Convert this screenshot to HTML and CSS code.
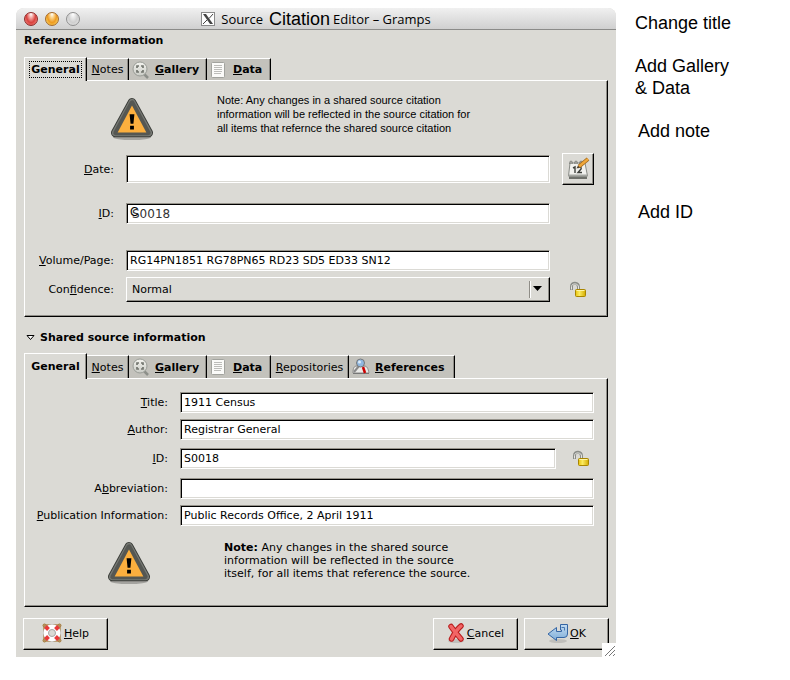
FILE: index.html
```html
<!DOCTYPE html>
<html lang="en">
<head>
    <meta charset="UTF-8">
    <meta name="viewport" content="width=device-width, initial-scale=1.0">
    <title>Source Citation Editor - Gramps</title>
    <link rel="stylesheet" href="styles.css">
</head>
<body>

<!-- shared icons -->
<svg class="defs" width="0" height="0" aria-hidden="true">
    <linearGradient id="ring" x1="0" y1="0" x2="0" y2="1">
        <stop offset="0" stop-color="#f4f4ef"/>
        <stop offset="1" stop-color="#c9cbc5"/>
    </linearGradient>
    <linearGradient id="gold" x1="0" y1="0" x2="1" y2="0">
        <stop offset="0" stop-color="#e8c40c"/>
        <stop offset="0.4" stop-color="#fbea60"/>
        <stop offset="1" stop-color="#d4ac00"/>
    </linearGradient>
    <linearGradient id="blue" x1="0" y1="0" x2="0" y2="1">
        <stop offset="0" stop-color="#c3dcf2"/>
        <stop offset="1" stop-color="#7fadd8"/>
    </linearGradient>
    <symbol id="warning" viewBox="-1 -1 46 46">
        <ellipse cx="22" cy="41" rx="20" ry="3" fill="#000" opacity="0.25"/>
        <path d="M22 4.500 4.500 36.500H39.500Z" fill="#555753" stroke="#3c3e3a" stroke-width="9" stroke-linejoin="round"/>
        <path d="M22 4.500 4.500 36.500H39.500Z" fill="#555753" stroke="#767873" stroke-width="7" stroke-linejoin="round"/>
        <path d="M22 5 5 36.500H39Z" fill="#555753" stroke="#555753" stroke-width="5" stroke-linejoin="round"/>
        <path d="M22 8 7 36H37Z" fill="#fcaf3e"/>
        <path d="M19.500 17h5l-1 10h-3ZM20 29h4v4h-4Z" fill="#000"/>
    </symbol>
    <symbol id="gallery" viewBox="0 0 18 18">
        <path d="M12 13l4 4" stroke="#8d908a" stroke-width="2.500"/>
        <circle cx="8" cy="8" r="7" fill="url(#ring)" stroke="#9a9d97"/>
        <path d="M5 7V5h2M9 5h2v2M11 9v2h-2M7 11H5v-2" fill="none" stroke="#73766f" stroke-width="1.700"/>
    </symbol>
    <symbol id="page" viewBox="0 0 18 18">
        <rect x="1.500" y="1.500" width="13" height="15" rx="1" fill="#fbfbf9" stroke="#a2a39e"/>
        <path d="M4 4.500h8M4 6.500h8M4 8.500h8M4 10.500h8M4 12.500h7" stroke="#bdbdba"/>
    </symbol>
    <symbol id="lock" viewBox="0 0 18 18">
        <path d="M2.500 9V5.500C2.500 1 9.500 1 9.500 6V8" fill="none" stroke="#8b8d88" stroke-width="3"/>
        <path d="M2.500 8.500V5.500C2.500 2 9.500 2 9.500 6V8" fill="none" stroke="#e6e6e2" stroke-width="1"/>
        <rect x="6.500" y="8.500" width="10" height="7" rx="1" fill="url(#gold)" stroke="#a88500"/>
        <path d="M7.500 9.500h8" stroke="#fff6a8"/>
    </symbol>
</svg>

<div class="page">
    <main class="window">
        <header class="titlebar">
            <div class="lights">
                <button class="light red" aria-label="Close"></button>
                <button class="light amber" aria-label="Minimize"></button>
                <button class="light grey" aria-label="Zoom" disabled></button>
            </div>
            <h1>
                <svg width="14" height="14" viewBox="0 0 14 14"><rect x="0.500" y="0.500" width="13" height="13" fill="#fdfdfd" stroke="#8a8a8a"/><path d="M2 2h3l7 10H9Z" fill="#444"/><path d="M12 2 8 6.500M6 8l-4 4" stroke="#444"/></svg>
                <span class="word">Source</span>
                <span class="citation">Citation</span>
                <span>Editor – Gramps</span>
            </h1>
        </header>

        <form class="content">
            <h2>Reference information</h2>
            <div class="tabs" role="tablist">
                <button type="button" class="tab active focused general" role="tab" aria-selected="true"><span>General</span></button>
                <button type="button" class="tab notes" role="tab">
                    <span><u>N</u>otes</span></button>
                <button type="button" class="tab strong gallery" role="tab">
                    <svg width="18" height="18"><use href="#gallery"/></svg>
                    <span><u>G</u>allery</span></button>
                <button type="button" class="tab strong data" role="tab">
                    <svg width="18" height="18"><use href="#page"/></svg>
                    <span><u>D</u>ata</span></button>
            </div>
            <section class="panel reference">
                <div class="hint">
                    <svg width="44" height="44"><use href="#warning"/></svg>
                    <p>Note: Any changes in a shared source citation<br>
                    information will be reflected in the source citation for<br>
                    all items that refernce the shared source citation</p>
                </div>
                <div class="row date-row">
                    <label for="date"><u>D</u>ate:</label>
                    <input type="text" id="date" class="tall">
                    <button type="button" class="raised calendar" aria-label="Edit date">
                        <svg width="24" height="24" viewBox="0 0 24 24">
                            <path d="M3 19h18v3H3Z" fill="#6f716c"/>
                            <path d="M4 6h15l2.500 13h-19Z" fill="#f1f1ee" stroke="#898b86"/>
                            <path d="M2.500 18.500h19" stroke="#a5a7a2" stroke-width="2"/>
                            <path d="M4 7c-1-4 3-4 2 0M9 7c-1-4 3-4 2 0M14 7c-1-4 3-4 2 0" fill="none" stroke="#6e706b"/>
                            <path d="M7 11l2-1v6M12 11c1-2 4-1 3 1l-3 3.500h4" fill="none" stroke="#3e403c" stroke-width="1.400"/>
                            <path d="M13 9.500 22 2" stroke="#9a651c" stroke-width="4"/>
                            <path d="M13 9.500 22 2" stroke="#efa63a" stroke-width="2.500"/>
                            <path d="M10.500 11.500l1.500-3 2 2Z" fill="#554430"/>
                        </svg>
                    </button>
                </div>
                <div class="row id-row">
                    <label for="ref-id"><u>I</u>D:</label>
                    <div class="field">
                        <input type="text" id="ref-id" class="edited" value="S0018">
                        <span class="over">C</span>
                    </div>
                </div>
                <div class="row volume-row">
                    <label for="volume"><u>V</u>olume/Page:</label>
                    <input type="text" id="volume" value="RG14PN1851 RG78PN65 RD23 SD5 ED33 SN12">
                </div>
                <div class="row">
                    <label for="confidence">Con<u>f</u>idence:</label>
                    <div class="field">
                        <select id="confidence" class="raised">
                            <option>Normal</option>
                        </select>
                        <svg class="arrow" width="22" height="17" viewBox="0 0 22 17"><path d="M1.500 0v17" stroke="#8f8d87"/><path d="M2.500 0v17" stroke="#fff"/><path d="M5 5h9L9.500 10Z" fill="#000"/></svg>
                    </div>
                    <svg class="lock" width="18" height="18"><use href="#lock"/></svg>
                </div>
            </section>

            <h2 class="shared-title">
                <svg width="10" height="8" viewBox="0 0 10 8"><path d="M1 1.500h7L4.500 5.500Z" fill="#fff" stroke="#000"/></svg>
                Shared source information
            </h2>
            <div class="tabs lower" role="tablist">
                <button type="button" class="tab active general" role="tab" aria-selected="true"><span>General</span></button>
                <button type="button" class="tab notes" role="tab">
                    <span><u>N</u>otes</span></button>
                <button type="button" class="tab strong gallery" role="tab">
                    <svg width="18" height="18"><use href="#gallery"/></svg>
                    <span><u>G</u>allery</span></button>
                <button type="button" class="tab strong data" role="tab">
                    <svg width="18" height="18"><use href="#page"/></svg>
                    <span><u>D</u>ata</span></button>
                <button type="button" class="tab repositories" role="tab">
                    <span><u>R</u>epositories</span></button>
                <button type="button" class="tab strong references" role="tab">
                    <svg width="18" height="18" viewBox="0 0 18 18">
                        <path d="M1 15c0-5 1-7 4-7h7c3 0 4 2 5 7Z" fill="#e9e9e7" stroke="#8c8c8a"/>
                        <path d="M1 15.500h16" stroke="#777"/>
                        <path d="M11 9l2 6" stroke="#cc0000" stroke-width="2.500"/>
                        <path d="M7 8l-5 6" stroke="#888" stroke-width="2"/>
                        <circle cx="8.500" cy="5" r="4" fill="#8fb7e0" stroke="#777"/>
                        <circle cx="7.500" cy="4" r="1.500" fill="#dcebf8"/>
                    </svg>
                    <span><u>R</u>eferences</span></button>
            </div>
            <section class="panel source">
                <div class="row">
                    <label for="title"><u>T</u>itle:</label>
                    <input type="text" id="title" value="1911 Census">
                </div>
                <div class="row">
                    <label for="author"><u>A</u>uthor:</label>
                    <input type="text" id="author" value="Registrar General">
                </div>
                <div class="row source-id">
                    <label for="source-id"><u>I</u>D:</label>
                    <div class="with-lock">
                        <input type="text" id="source-id" value="S0018">
                        <svg class="lock" width="18" height="18"><use href="#lock"/></svg>
                    </div>
                </div>
                <div class="row abbreviation">
                    <label for="abbreviation">A<u>b</u>breviation:</label>
                    <input type="text" id="abbreviation">
                </div>
                <div class="row">
                    <label for="publication"><u>P</u>ublication Information:</label>
                    <input type="text" id="publication" value="Public Records Office, 2 April 1911">
                </div>
                <div class="hint">
                    <svg width="44" height="44"><use href="#warning"/></svg>
                    <p><b>Note:</b> Any changes in the shared source<br>
                    information will be reflected in the source<br>
                    itself, for all items that reference the source.</p>
                </div>
            </section>

            <footer class="actions">
                <button type="button" class="raised action help">
                    <svg width="20" height="20" viewBox="0 0 20 20">
                        <path d="M2 2h16v16H2Z" fill="none" stroke="#b38a4d" stroke-width="1.500"/>
                        <circle cx="2.500" cy="2.500" r="1.500" fill="none" stroke="#a47b40"/><circle cx="17.500" cy="2.500" r="1.500" fill="none" stroke="#a47b40"/>
                        <circle cx="2.500" cy="17.500" r="1.500" fill="none" stroke="#a47b40"/><circle cx="17.500" cy="17.500" r="1.500" fill="none" stroke="#a47b40"/>
                        <circle cx="10" cy="10" r="6" fill="none" stroke="#aaa" stroke-width="6"/>
                        <circle cx="10" cy="10" r="6" fill="none" stroke="#fff" stroke-width="5"/>
                        <path d="M3.500 3.500l3 3M16.500 3.500l-3 3M3.500 16.500l3-3M16.500 16.500l-3-3" stroke="#e83a3a" stroke-width="4"/>
                        <circle cx="10" cy="10" r="3.500" fill="#dbdad5" stroke="#aaa"/>
                    </svg>
                    <span><u>H</u>elp</span>
                </button>
                <button type="button" class="raised action cancel">
                    <svg width="18" height="20" viewBox="0 0 18 20">
                        <ellipse cx="9" cy="18" rx="8" ry="2" fill="#000" opacity="0.12"/>
                        <path d="M4 3.500C7 8 10 11 14 16M14 3C9 7 7 11 4.500 16" fill="none" stroke="#b81c1c" stroke-width="5.500" stroke-linecap="round"/>
                        <path d="M4 3.500C7 8 10 11 14 16M14 3C9 7 7 11 4.500 16" fill="none" stroke="#f26565" stroke-width="3.500" stroke-linecap="round"/>
                    </svg>
                    <span><u>C</u>ancel</span>
                </button>
                <button type="submit" class="raised action ok">
                    <svg width="21" height="20" viewBox="0 0 21 20">
                        <ellipse cx="11" cy="18" rx="9" ry="2" fill="#000" opacity="0.12"/>
                        <path d="M13.500 1.500h7V11q0 3.500-3.500 3.500H9.500v3L1 11l8.500-6.500v4h5V7h-1Z" fill="url(#blue)" stroke="#3465a4"/>
                        <path d="M14.500 4.500h3v3" fill="none" stroke="#4a78b0"/>
                    </svg>
                    <span><u>O</u>K</span>
                </button>
            </footer>
        </form>
        <svg class="grip" width="14" height="14" viewBox="0 0 14 14"><path d="M3 13 13 3M7 13l6-6M11 13l2-2" stroke="#777"/></svg>
    </main>

    <aside class="remarks">
        <p>Change title</p>
        <p>Add Gallery<br>&amp; Data</p>
        <p class="inset">Add note</p>
        <p class="inset last">Add ID</p>
    </aside>
</div>

</body>
</html>
```
FILE: styles.css
```css
* {
    box-sizing: border-box;
}
body {
    margin: 0;
    background-color: #fff;
    color: #000;
    font-family: "DejaVu Sans", Verdana, sans-serif;
    font-size: 11px;
    line-height: 13px;
}
h1, h2, p {
    margin: 0;
}
button, input, select {
    font: inherit;
    color: inherit;
    margin: 0;
    border-radius: 0;
}
svg {
    flex: none;
    display: block;
}
.defs {
    position: absolute;
}
.page {
    display: flex;
    align-items: flex-start;
    padding: 8px 0 24px 16px;
}
.window {
    position: relative;
    flex: 1;
    min-width: 0;
    background-color: #dbdad5;
    border-radius: 8px 8px 0 0;
}

/* title bar */
.titlebar {
    display: flex;
    align-items: center;
    height: 22px;
    padding: 0 8px;
    border-bottom: 1px solid #8b8b89;
    border-radius: 8px 8px 0 0;
    background: linear-gradient(#f0f0f0, #d0d0d0);
}
.lights {
    display: flex;
    gap: 7px;
    width: 64px;
}
.light {
    width: 14px;
    height: 14px;
    padding: 0;
    border: 1px solid #777;
    border-radius: 50%;
}
.red {
    border-color: #8c2a2a;
    background: radial-gradient(ellipse at 50% 10%, #fff 0, #f3a9a4 25%, #d8423f 55%, #ff9c90 100%);
}
.amber {
    border-color: #a5692a;
    background: radial-gradient(ellipse at 50% 10%, #fff 0, #fbd38b 25%, #ee9a20 55%, #ffef80 100%);
}
.grey {
    border-color: #8f8f8f;
    background: radial-gradient(ellipse at 50% 10%, #fff 0, #cfcfcf 55%, #ececec 100%);
}
.titlebar h1 {
    display: flex;
    flex: 1;
    align-items: center;
    justify-content: center;
    padding-right: 64px;
    font: 13px/20px "Open Sans", "Noto Sans", sans-serif;
}
.word {
    margin: 0 6px;
}
.citation {
    margin-right: 3px;
    font: 18px/20px "Liberation Sans", Arial, sans-serif;
}

/* tabs */
.content {
    padding: 0 8px 7px;
}
h2 {
    font-size: 11px;
    line-height: 22px;
}
.tabs {
    display: flex;
    align-items: flex-end;
    margin-top: 5px;
}
.tab {
    display: flex;
    align-items: center;
    justify-content: center;
    gap: 5px;
    height: 22px;
    padding: 0;
    border: 0;
    border-top: 1px solid #fff;
    border-right: 1px solid #000;
    box-shadow: inset -1px 0 #8f8d87;
    background-color: #c3c2bc;
}
.tab.active {
    position: relative;
    height: 24px;
    margin-bottom: -1px;
    padding-bottom: 1px;
    border-left: 1px solid #fff;
    background-color: #dbdad5;
    font-weight: bold;
}
.lower .tab {
    height: 23px;
}
.lower .tab.active {
    height: 26px;
}
.tab.strong {
    justify-content: flex-start;
    padding-left: 3px;
    font-weight: bold;
}
.focused span {
    padding: 1px;
    outline: 1px dotted #000;
}
.general {
    width: 63px;
}
.notes {
    width: 42px;
}
.gallery, .repositories {
    width: 78px;
}
.data {
    width: 64px;
}
.references {
    width: 106px;
}

/* panels and form rows */
.panel {
    display: flex;
    flex-direction: column;
    border: 1px solid;
    border-color: #fff #000 #000 #fff;
    box-shadow: inset -1px -1px #8f8d87;
}
.reference {
    padding: 12px 13px 14px 0;
}
.source {
    gap: 6px;
    padding: 13px 13px 21px 0;
}
.row {
    display: grid;
    grid-template-columns: 89px 1fr 32px;
    column-gap: 12px;
    align-items: center;
}
.source .row {
    grid-template-columns: 143px 1fr;
}
.source .source-id {
    margin-top: 2px;
}
.source .abbreviation {
    margin-top: 3px;
}
.row label {
    text-align: right;
    white-space: nowrap;
}
.row .lock {
    justify-self: center;
}
.date-row {
    margin: 12px 0 18px;
}
.volume-row {
    margin: 26px 0 6px;
}
input {
    width: 100%;
    min-width: 0;
    height: 21px;
    padding: 0 3px;
    border: 1px solid;
    border-color: #96938b #fff #fff #96938b;
    box-shadow: inset 1px 1px #000, inset -1px -1px #dbdad5;
    background-color: #fff;
}
.tall {
    height: 28px;
}
.field {
    position: relative;
}
.edited {
    display: block;
    padding-left: 5px;
    font-size: 12px;
    color: #333;
}
.over {
    position: absolute;
    top: 3px;
    left: 4px;
    font-family: "Liberation Sans", Arial, sans-serif;
    font-size: 12px;
}
.raised {
    border: 1px solid;
    border-color: #fff #000 #000 #fff;
    box-shadow: inset -1px -1px #8f8d87;
    background-color: #dbdad5;
}
select {
    display: block;
    appearance: none;
    width: 100%;
    height: 25px;
    padding: 0 24px 0 5px;
}
.arrow {
    position: absolute;
    top: 4px;
    right: 0;
    pointer-events: none;
}
.calendar {
    display: flex;
    align-items: center;
    justify-content: center;
    height: 32px;
    padding: 0;
}
.with-lock {
    display: flex;
    align-items: center;
    gap: 16px;
    padding-right: 4px;
}

/* warnings */
.hint {
    display: flex;
    align-items: center;
    padding-left: 82px;
    gap: 73px;
}
.reference .hint {
    align-items: flex-end;
    gap: 63px;
    height: 48px;
    padding-left: 85px;
    font: 11px/14px "Liberation Sans", Arial, sans-serif;
}
.reference .hint p {
    align-self: flex-start;
}
.source .hint {
    margin-top: 9px;
}
.source .hint p {
    align-self: flex-start;
}
.shared-title {
    display: flex;
    align-items: center;
    gap: 4px;
    margin-top: 10px;
    padding-left: 2px;
}
.lower {
    margin-top: 4px;
}

/* buttons */
.actions {
    display: flex;
    gap: 6px;
    margin: 11px -1px 0;
}
.action {
    display: flex;
    align-items: center;
    justify-content: center;
    gap: 2px;
    width: 85px;
    height: 32px;
    padding: 0 0 2px;
}
.help {
    margin-right: auto;
}
.grip {
    position: absolute;
    right: 0;
    bottom: 0;
    background-color: #fff;
}

/* remarks beside the window */
.remarks {
    width: 174px;
    padding: 4px 0 0 19px;
    font: 18px/22px "Liberation Sans", Arial, sans-serif;
}
.remarks p {
    margin-bottom: 21px;
}
.remarks .inset {
    padding-left: 3px;
}
.remarks .last {
    margin-top: 59px;
}
```
